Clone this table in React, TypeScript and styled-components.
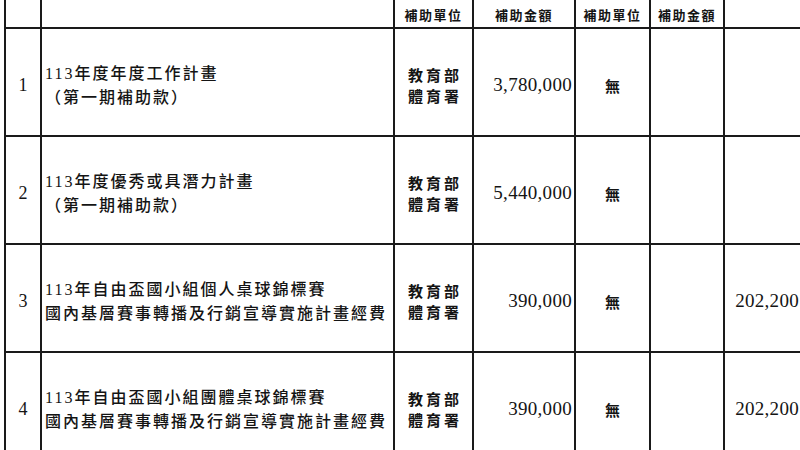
import React from 'react';
import styled, { createGlobalStyle } from 'styled-components';

const GlobalStyle = createGlobalStyle`
    html, body {
        margin: 0;
        background: #fff;
        overflow: hidden;
    }
`;

const Page = styled.div`
    width: 800px;
    height: 450px;
    overflow: hidden;
    padding-left: 4px;
    box-sizing: border-box;
    color: #141414;
    font-family: "Liberation Serif", "Noto Sans CJK TC", serif;
`;

const Sheet = styled.table`
    border-collapse: collapse;
    table-layout: fixed;
    width: 804px;
    margin-top: -2px;

    td, th {
        border: 2px solid #1a1a1a;
        padding: 0;
        overflow: hidden;
        white-space: nowrap;
    }
`;

const HeadCell = styled.th`
    height: 25px;
    font-family: "Noto Sans CJK TC", sans-serif;
    font-size: 13px;
    font-weight: 700;
    letter-spacing: 1.5px;
    text-align: center;
    vertical-align: middle;
    padding-top: 2px !important;
`;

const Row = styled.tr`
    height: 108px;
`;

const Cell = styled.td<{ $align?: 'left' | 'center' | 'right' }>`
    text-align: ${p => p.$align || 'center'};
    vertical-align: middle;
    padding-top: 6px !important;
`;

const No = styled(Cell)`
    font-size: 18px;
`;

const Title = styled(Cell)`
    padding-left: 3px !important;
    font-family: "Liberation Serif", "Noto Sans CJK TC", serif;
    font-size: 16px;
    font-weight: 500;
    letter-spacing: 2px;
    line-height: 22px;

    span {
        font-family: "Noto Sans CJK TC", sans-serif;
    }
`;

const Unit = styled(Cell)`
    font-family: "Noto Sans CJK TC", sans-serif;
    font-size: 15px;
    font-weight: 700;
    letter-spacing: 3px;
    line-height: 21px;
    padding-left: 3px !important;
`;

const Amount = styled(Cell)<{ $pad?: number }>`
    font-size: 19px;
    letter-spacing: 0.3px;
    padding-right: ${p => p.$pad ?? 2}px !important;
`;

const None = styled(Cell)`
    font-family: "Noto Sans CJK TC", sans-serif;
    font-size: 15px;
    font-weight: 700;
`;

type Item = {
    no: number;
    line1: string;
    line2: string;
    amount: string;
    extra?: string;
};

const items: Item[] = [
    { no: 1, line1: '113年度年度工作計畫', line2: '（第一期補助款）', amount: '3,780,000' },
    { no: 2, line1: '113年度優秀或具潛力計畫', line2: '（第一期補助款）', amount: '5,440,000' },
    { no: 3, line1: '113年自由盃國小組個人桌球錦標賽', line2: '國內基層賽事轉播及行銷宣導實施計畫經費', amount: '390,000', extra: '202,200' },
    { no: 4, line1: '113年自由盃國小組團體桌球錦標賽', line2: '國內基層賽事轉播及行銷宣導實施計畫經費', amount: '390,000', extra: '202,200' },
];

function TitleText({ text }: { text: string }) {
    // digits stay in the serif face, the rest in CJK
    const m = text.match(/^(\d+)(.*)$/);
    if (!m) return <span>{text}</span>;
    return (
        <>
            {m[1]}
            <span>{m[2]}</span>
        </>
    );
}

export default function App() {
    return (
        <Page>
            <GlobalStyle />
            <Sheet>
                <colgroup>
                    <col style={{ width: 36 }} />
                    <col style={{ width: 353 }} />
                    <col style={{ width: 79 }} />
                    <col style={{ width: 102 }} />
                    <col style={{ width: 75 }} />
                    <col style={{ width: 74 }} />
                    <col style={{ width: 85 }} />
                </colgroup>
                <thead>
                    <tr>
                        <HeadCell />
                        <HeadCell />
                        <HeadCell>補助單位</HeadCell>
                        <HeadCell>補助金額</HeadCell>
                        <HeadCell>補助單位</HeadCell>
                        <HeadCell>補助金額</HeadCell>
                        <HeadCell />
                    </tr>
                </thead>
                <tbody>
                    {items.map(item => (
                        <Row key={item.no}>
                            <No>{item.no}</No>
                            <Title $align="left">
                                <TitleText text={item.line1} />
                                <br />
                                <TitleText text={item.line2} />
                            </Title>
                            <Unit>教育部<br />體育署</Unit>
                            <Amount $align="right">{item.amount}</Amount>
                            <None>無</None>
                            <Cell />
                            <Amount $align="right" $pad={9}>{item.extra}</Amount>
                        </Row>
                    ))}
                </tbody>
            </Sheet>
        </Page>
    );
}
